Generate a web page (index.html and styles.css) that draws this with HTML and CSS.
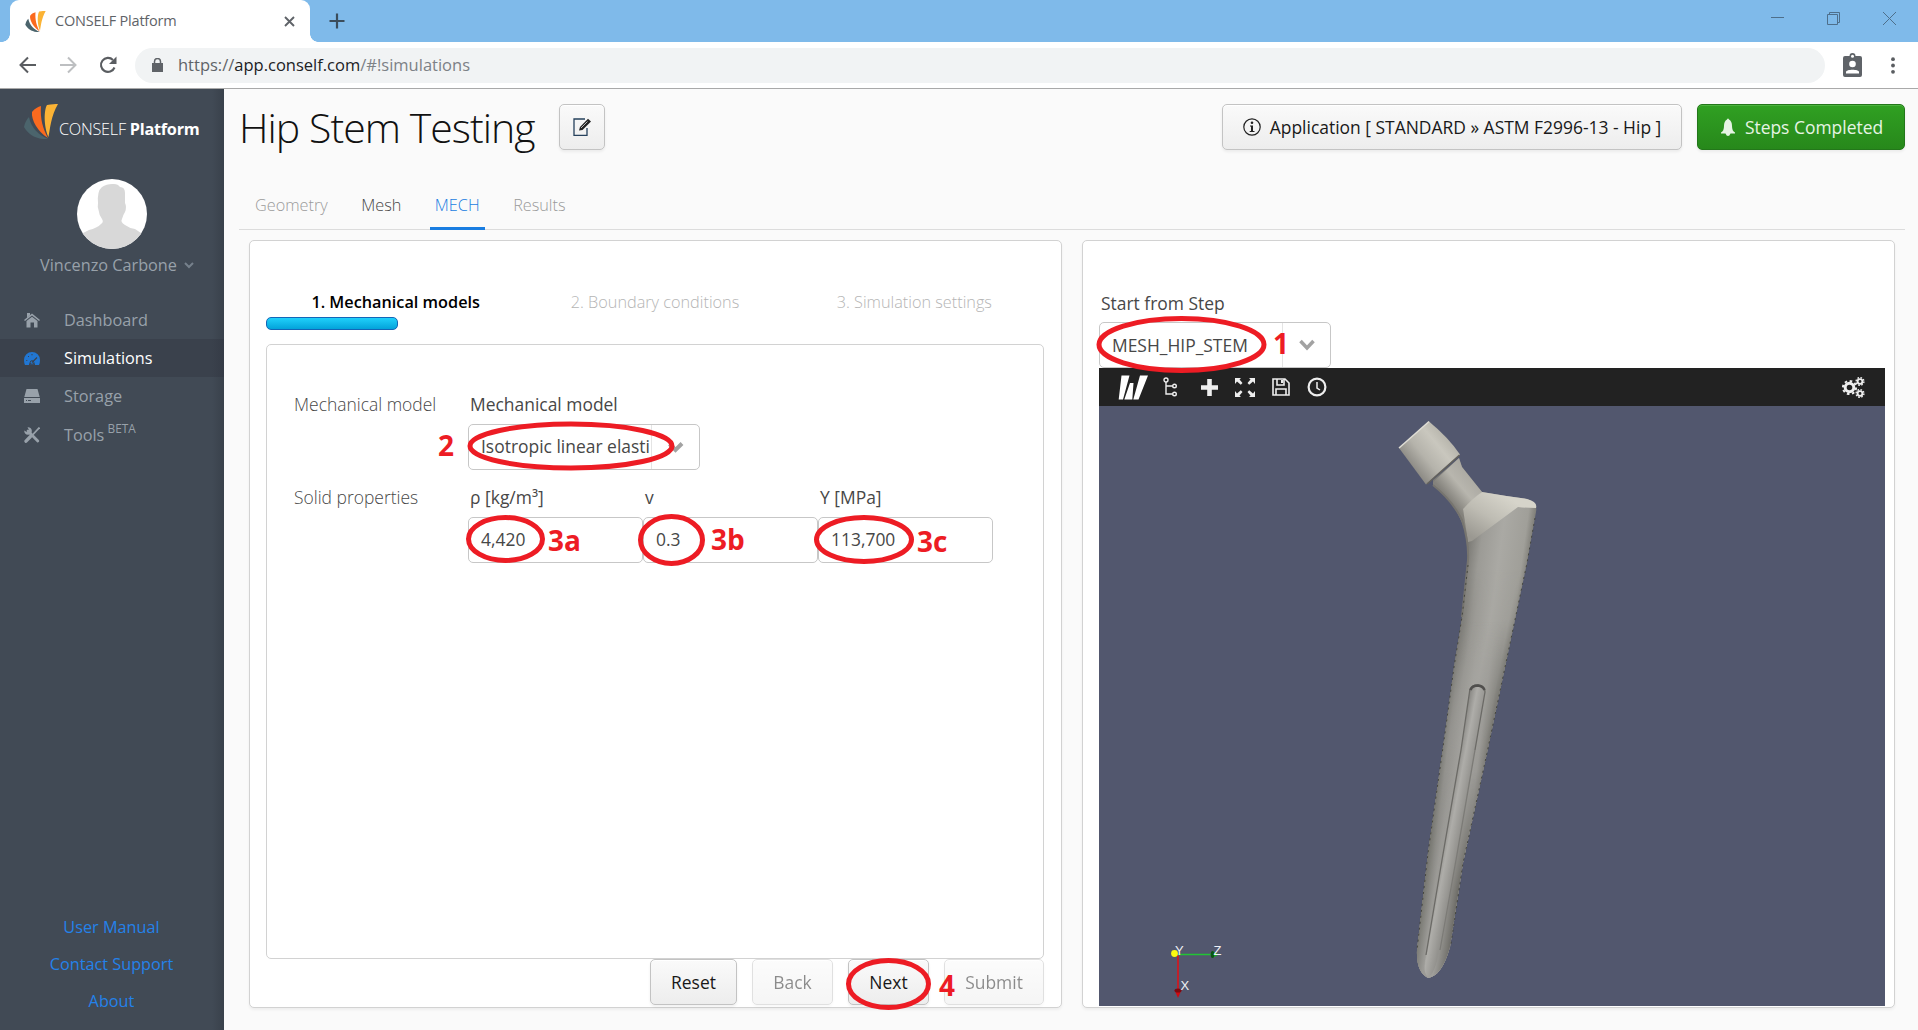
FILE: index.html
```html
<!DOCTYPE html>
<html lang="en">
<head>
<meta charset="utf-8">
<title>CONSELF Platform</title>
<link rel="stylesheet" href="styles.css">
</head>
<body>
<svg class="defs" width="0" height="0">
  <symbol id="flame" viewBox="0 0 34 35">
    <path d="M34 0C27 12 26 25 24.500 33C19.500 22 20 6 23 1C28 0 31 0 34 0Z" fill="#fbb335"/>
    <path d="M17 2C16 15 19 25 24 34C14 28 7 16 8 8C11 4 14 3 17 2Z" fill="#fb6a1e"/>
    <path d="M5 13C7 24 15 31 24 35C12 36 4 30 0 23C1 18 3 15 5 13Z" fill="#4b646c"/>
  </symbol>
</svg>
<header class="tabstrip">
  <div class="tab">
    <svg class="favicon" width="21" height="21"><use href="#flame"/></svg>
    <span class="tab-title">CONSELF Platform</span>
    <svg class="tab-close" width="11" height="11" viewBox="0 0 11 11"><path d="M1 1L10 10M10 1L1 10" stroke="#5f6368" stroke-width="1.9"/></svg>
  </div>
  <svg class="newtab" width="16" height="16" viewBox="0 0 16 16"><path d="M8 .5V15.5M.5 8H15.500" stroke="#3b4d5c" stroke-width="2.200"/></svg>
  <div class="winctl">
    <svg width="13" height="13" viewBox="0 0 13 13"><path d="M0 5.500H13" stroke="#4e6f8b"/></svg>
    <svg width="13" height="13" viewBox="0 0 13 13"><path d="M.5 2.500H10.500V12.500H.5ZM2.500 2.500V.5H12.500V10.500H10.500" fill="none" stroke="#4e6f8b"/></svg>
    <svg width="13" height="13" viewBox="0 0 13 13"><path d="M0 0L13 13M13 0L0 13" stroke="#4e6f8b"/></svg>
  </div>
</header>
<nav class="toolbar">
  <svg class="nav" width="18" height="18" viewBox="0 0 18 18"><path d="M17 9H2M9 1.500L1.500 9L9 16.500" fill="none" stroke="#5a5d61" stroke-width="2"/></svg>
  <svg class="nav" width="18" height="18" viewBox="0 0 18 18"><path d="M1 9H16M9 1.500L16.500 9L9 16.500" fill="none" stroke="#bdbfc1" stroke-width="2"/></svg>
  <svg class="nav" width="18" height="18" viewBox="0 0 18 18"><path d="M15.500 11.500A7 7 0 1 1 14 4" fill="none" stroke="#5a5d61" stroke-width="2.100"/><path d="M17.500 .5V8H10Z" fill="#5a5d61"/></svg>
  <div class="omnibox">
    <svg width="11" height="14" viewBox="0 0 11 14"><path d="M0 5H11V14H0Z" fill="#5f6368"/><path d="M2.500 6V3.500A3 3 0 0 1 8.500 3.500V6" fill="none" stroke="#5f6368" stroke-width="1.500"/></svg>
    <span class="url">https://<b>app.conself.com</b><i>/#!simulations</i></span>
  </div>
  <svg class="badge" width="19" height="24" viewBox="0 0 19 24"><path d="M2 3H6.500A3 3 0 0 1 12.500 3H17Q19 3 19 5V22Q19 24 17 24H2Q0 24 0 22V5Q0 3 2 3Z" fill="#5f6368"/><circle cx="9.500" cy="3.300" r="1.500" fill="#fff"/><circle cx="9.500" cy="11" r="3.300" fill="#fff"/><path d="M3 20.500V19C3 16 16 16 16 19V20.500Z" fill="#fff"/></svg>
  <svg class="dots" width="4" height="17" viewBox="0 0 4 17"><g fill="#5a5d61"><circle cx="2" cy="2.200" r="1.900"/><circle cx="2" cy="8.500" r="1.900"/><circle cx="2" cy="14.800" r="1.900"/></g></svg>
</nav>
<div class="app">
  <aside class="sidebar">
    <div class="brand"><svg width="34" height="35"><use href="#flame"/></svg><span>CONSELF <b>Platform</b></span></div>
    <svg class="avatar" width="70" height="70" viewBox="0 0 70 70"><clipPath id="round"><circle cx="35" cy="35" r="35"/></clipPath><g clip-path="url(#round)"><path d="M0 0H70V70H0Z" fill="#fff"/><path d="M25 8Q30 4.500 37 5Q41 5 43 8Q48 8 48 14V24Q50 28 48 33Q46 36 45 40Q43 43 48 46Q52 49 58 50L64 54L70 60V70H0V60L6 54L12 51Q20 49 24 45Q27 43 25 40Q22 36 22 33Q20 28 21 24Q20 12 25 8Z" fill="#d8d8d8"/></g></svg>
    <div class="user"><span>Vincenzo Carbone</span><svg width="10" height="7" viewBox="0 0 10 7"><path d="M1 1L5 5L9 1" fill="none" stroke="#76818c" stroke-width="2"/></svg></div>
    <ul class="menu">
      <li><svg width="16" height="15" viewBox="0 0 16 15"><path d="M0 7L8 .5L16 7L15 8L8 2.500L1 8ZM3 0H6V2L3 4.500ZM2.500 8L8 3.800L13.500 8V14.500H10V9.500H6.500V14.500H2.500Z" fill="#98a1aa"/></svg><span>Dashboard</span></li>
      <li class="on"><svg width="16" height="13" viewBox="0 0 16 13"><path d="M1 13Q0 11 0 8A8 8 0 0 1 16 8Q16 11 15 13H11A3 3 0 0 0 5 13Z" fill="#2176d2"/><circle cx="8" cy="10.500" r="2.200" fill="#2176d2"/><path d="M8 10.500L13 5.500" stroke="#3a424d" stroke-width="1.300"/><circle cx="8" cy="10.500" r="1.800" fill="none" stroke="#3a424d"/><path d="M2.300 8.500H3.300M4 4L5 5M8 2V3.300" stroke="#3a424d"/></svg><span>Simulations</span></li>
      <li><svg width="16" height="14" viewBox="0 0 16 14"><path d="M2.500 0H13.500L15.700 8H.3ZM0 9H16V14H0Z" fill="#98a1aa"/><path d="M2 11.500H3M4 11.500H7" stroke="#414a55"/></svg><span>Storage</span></li>
      <li class="tools"><svg width="16" height="16" viewBox="0 0 16 16"><path d="M4 4L13.800 14" stroke="#98a1aa" stroke-width="2.800" stroke-linecap="round"/><path d="M3.500 .3A3.800 3.800 0 1 1 .3 3.500L2.800 5L5 3Z" fill="#98a1aa"/><path d="M15.500 .5L8.500 8" stroke="#98a1aa" stroke-width="1.800"/><path d="M6.500 9.500L2 14.200" stroke="#98a1aa" stroke-width="3.300" stroke-linecap="round"/></svg><span>Tools <sup>BETA</sup></span></li>
    </ul>
    <div class="links"><a>User Manual</a><a>Contact Support</a><a>About</a></div>
  </aside>
  <main class="main">
    <div class="head">
      <h1>Hip Stem Testing</h1>
      <button class="btn edit"><svg width="19" height="18" viewBox="0 0 19 18"><path d="M14 10V17.300H1V1H12" fill="none" stroke="#26415c" stroke-width="1.300"/><path d="M6 12.500L7 9L15 .8L18 3.500L9.500 12Z" fill="#222"/><path d="M8 10L14.500 3.500" stroke="#ddd" stroke-width=".8"/></svg></button>
      <button class="btn info"><svg width="18" height="18" viewBox="0 0 18 18"><circle cx="9" cy="9" r="8.200" fill="none" stroke="#222" stroke-width="1.200"/><circle cx="9" cy="4.700" r="1.300" fill="#222"/><path d="M7 7.500H10V13H11.500V14H6.700V13H8V8.500H7Z" fill="#222"/></svg><span>Application [ STANDARD » ASTM F2996-13 - Hip ]</span></button>
      <button class="btn done"><svg width="14" height="18" viewBox="0 0 14 18"><path d="M6 1.500Q7 -.5 8 1.500Q11 3 11 8Q11 13 14 14.500V15.500H9.500Q8.500 18 7 18Q5.500 18 4.500 15.500H0V14.500Q3 13 3 8Q3 3 6 1.500Z" fill="#e6f4e4"/></svg><span>Steps Completed</span></button>
    </div>
    <div class="tabs"><span>Geometry</span><span class="avail">Mesh</span><span class="sel">MECH</span><span>Results</span></div>
    <div class="panels">
      <section class="panel wizard">
        <div class="steps"><span class="cur">1. Mechanical models</span><span>2. Boundary conditions</span><span>3. Simulation settings</span></div>
        <div class="progress"></div>
        <div class="form">
          <div class="row"><label class="cap">Mechanical model</label>
            <div class="field"><label>Mechanical model</label><div class="select"><span class="val">Isotropic linear elasti</span><span class="arrow"><svg width="18" height="12" viewBox="0 0 18 12"><path d="M2.500 3L8.500 9L15 2.500" fill="none" stroke="#a2a2a2" stroke-width="4"/></svg></span></div></div>
          </div>
          <div class="row"><label class="cap">Solid properties</label>
            <div class="fields">
              <div class="field"><label>ρ [kg/m³]</label><div class="input">4,420</div></div>
              <div class="field"><label>v</label><div class="input">0.3</div></div>
              <div class="field"><label>Y [MPa]</label><div class="input">113,700</div></div>
            </div>
          </div>
        </div>
        <div class="actions"><button class="btn reset">Reset</button><button class="btn off back">Back</button><button class="btn next">Next</button><button class="btn off submit">Submit</button></div>
      </section>
      <section class="panel preview">
        <div class="field"><label>Start from Step</label><div class="select"><span class="val">MESH_HIP_STEM</span><span class="arrow"><svg width="18" height="12" viewBox="0 0 18 12"><path d="M2.500 2L9 9L15.500 2" fill="none" stroke="#a2a2a2" stroke-width="3.500"/></svg></span></div></div>
        <div class="viewer">
          <div class="vbar">
            <svg class="w" width="30" height="25" viewBox="0 0 30 25"><path d="M3.500 0.500H11.500L5 24.500H.7ZM12 8H15.500L14.300 24.500H6.300ZM22 .5H30L20.500 24.500H15.300Z" fill="#fff"/></svg>
            <svg class="tree" width="14" height="20" viewBox="0 0 14 20"><g fill="none" stroke="#eee" stroke-width="1.400"><circle cx="3" cy="3" r="2"/><circle cx="11.500" cy="9" r="1.800"/><circle cx="11.500" cy="17" r="1.800"/><path d="M3 5V17H9.500M3 9H9.500"/></g></svg>
            <svg class="plus" width="17" height="17" viewBox="0 0 17 17"><path d="M8.500 0V17M0 8.500H17" stroke="#eee" stroke-width="4.600"/></svg>
            <svg class="full" width="20" height="19" viewBox="0 0 20 19"><path d="M0 0H6L4.500 1.500L7.500 5L5.800 6.700L2 3.600L0 6ZM20 0V6L18 3.600L14.200 6.700L12.500 5L15.500 1.500L14 0ZM0 19V13L2 15.400L5.800 12.300L7.500 14L4.500 17.500L6 19ZM20 19H14L15.500 17.500L12.500 14L14.200 12.300L18 15.400L20 13Z" fill="#eee"/></svg>
            <svg class="save" width="18" height="18" viewBox="0 0 18 18"><path d="M1 1H13L17 5V17H1ZM5 1V7H12V1M4 17V11H14V17" fill="none" stroke="#eee" stroke-width="1.600"/><path d="M9 2H11V5H9Z" fill="#eee"/></svg>
            <svg class="clock" width="20" height="20" viewBox="0 0 20 20"><circle cx="10" cy="10" r="8.400" fill="none" stroke="#eee" stroke-width="2.200"/><path d="M10 5V11L13 13" fill="none" stroke="#eee" stroke-width="1.500"/></svg>
            <svg class="cogs" width="23" height="21" viewBox="0 0 23 21"><g fill="none" stroke="#eee"><circle cx="7.500" cy="10.500" r="4.300" stroke-width="3"/><circle cx="7.500" cy="10.500" r="6.600" stroke-width="2" stroke-dasharray="2.600 2.580"/><circle cx="18" cy="4.500" r="2.400" stroke-width="1.900"/><circle cx="18" cy="4.500" r="3.900" stroke-width="1.400" stroke-dasharray="1.600 1.460"/><circle cx="18" cy="16.500" r="2.400" stroke-width="1.900"/><circle cx="18" cy="16.500" r="3.900" stroke-width="1.400" stroke-dasharray="1.600 1.460"/></g></svg>
          </div>
          <svg class="scene" width="786" height="600" viewBox="1099 406 786 600">
            <defs>
              <linearGradient id="body" gradientUnits="userSpaceOnUse" x1="1439" y1="760" x2="1487" y2="766"><stop offset="0" stop-color="#75756f"/><stop offset=".15" stop-color="#93928e"/><stop offset=".5" stop-color="#a6a5a1"/><stop offset=".8" stop-color="#9b9a96"/><stop offset="1" stop-color="#75746f"/></linearGradient>
              <linearGradient id="upper" gradientUnits="userSpaceOnUse" x1="1460" y1="600" x2="1525" y2="609"><stop offset="0" stop-color="#7b7a75"/><stop offset=".2" stop-color="#9c9b96"/><stop offset=".5" stop-color="#aaa9a4"/><stop offset=".85" stop-color="#a09f99"/><stop offset="1" stop-color="#74736d"/></linearGradient>
              <linearGradient id="cap" gradientUnits="userSpaceOnUse" x1="1412" y1="466" x2="1446" y2="438"><stop offset="0" stop-color="#8e8c86"/><stop offset=".35" stop-color="#b5b3ab"/><stop offset=".75" stop-color="#c9c7be"/><stop offset="1" stop-color="#b9b7ae"/></linearGradient>
              <linearGradient id="neck" gradientUnits="userSpaceOnUse" x1="1450" y1="500" x2="1476" y2="478"><stop offset="0" stop-color="#84827c"/><stop offset=".5" stop-color="#b8b6ae"/><stop offset="1" stop-color="#aaa8a1"/></linearGradient>
              <linearGradient id="shoulder" gradientUnits="userSpaceOnUse" x1="1468" y1="535" x2="1496" y2="490"><stop offset="0" stop-color="#9a9891"/><stop offset=".5" stop-color="#bebcb3"/><stop offset="1" stop-color="#d6d4ca"/></linearGradient>
              <linearGradient id="fade" gradientUnits="userSpaceOnUse" x1="0" y1="620" x2="0" y2="760"><stop offset="0" stop-color="#000"/><stop offset="1" stop-color="#fff"/></linearGradient>
              <mask id="blend" maskUnits="userSpaceOnUse" x="1400" y="560" width="150" height="430"><path d="M1400 560H1550V990H1400Z" fill="url(#fade)"/></mask>
              <linearGradient id="mid" gradientUnits="userSpaceOnUse" x1="1452" y1="680" x2="1503" y2="690"><stop offset="0" stop-color="#7b7a75"/><stop offset=".2" stop-color="#989792"/><stop offset=".5" stop-color="#a8a7a2"/><stop offset=".85" stop-color="#9d9c97"/><stop offset="1" stop-color="#74736d"/></linearGradient>
              <linearGradient id="low" gradientUnits="userSpaceOnUse" x1="1422" y1="900" x2="1457" y2="905"><stop offset="0" stop-color="#75756f"/><stop offset=".3" stop-color="#9b9a96"/><stop offset=".6" stop-color="#a09f9b"/><stop offset="1" stop-color="#6b6a65"/></linearGradient>
              <linearGradient id="fadeLow" gradientUnits="userSpaceOnUse" x1="0" y1="770" x2="0" y2="890"><stop offset="0" stop-color="#000"/><stop offset="1" stop-color="#fff"/></linearGradient>
              <mask id="blendLow" maskUnits="userSpaceOnUse" x="1400" y="560" width="150" height="430"><path d="M1400 560H1550V990H1400Z" fill="url(#fadeLow)"/></mask>
              <linearGradient id="fadeMid" gradientUnits="userSpaceOnUse" x1="0" y1="570" x2="0" y2="660"><stop offset="0" stop-color="#000"/><stop offset="1" stop-color="#fff"/></linearGradient>
              <mask id="blendMid" maskUnits="userSpaceOnUse" x="1400" y="560" width="150" height="430"><path d="M1400 560H1550V990H1400Z" fill="url(#fadeMid)"/></mask>
              <linearGradient id="slot" gradientUnits="userSpaceOnUse" x1="1448" y1="810" x2="1464" y2="813"><stop offset="0" stop-color="#8b8a86"/><stop offset=".4" stop-color="#aeada9"/><stop offset="1" stop-color="#93928e"/></linearGradient>
              <path id="stem" d="M1433 480L1459 458L1462 467L1482 492Q1505 496 1527 499Q1538 502 1536 512L1527 563L1508 653L1487 753L1463 863L1450 947Q1442 976 1428 978Q1416 972 1417 950L1428 853L1445 733L1454 667L1462 617L1468 560Q1469 542 1462 520Q1452 500 1433 485Z"/>
            </defs>
            <use href="#stem" fill="url(#upper)"/>
            <g mask="url(#blendMid)"><use href="#stem" fill="url(#mid)"/></g>
            <g mask="url(#blend)"><use href="#stem" fill="url(#body)"/></g>
            <g mask="url(#blendLow)"><use href="#stem" fill="url(#low)"/></g>
            <path d="M1433 482L1459 458L1462 467L1482 492L1463 509L1468 541Q1458 502 1433 485Z" fill="url(#neck)"/>
            <path d="M1482 492Q1505 496 1527 499Q1538 502 1536 508Q1526 508 1518 507L1472 541L1468 542L1463 509Q1473 498 1482 492Z" fill="url(#shoulder)"/>
            <path d="M1468 560Q1469 542 1462 520Q1452 500 1433 485M1462 617L1468 560" fill="none" stroke="#77756f" stroke-width="2"/>
            <path d="M1429 421.500Q1448 437 1460 454.500L1426 484.500L1399 448Z" fill="url(#cap)"/>
            <path d="M1399 448L1429 421.500" stroke="#e0ded5" stroke-width="1.500"/>
            <path d="M1459.500 455L1427 484" stroke="#64625c" stroke-width="1.500"/>
            <path d="M1535 518L1527 563L1508 653L1487 753L1463 863L1451 944M1468 565L1462 617L1454 667L1445 733L1428 853L1417 950" fill="none" stroke="#45463f" stroke-width="1" stroke-dasharray="2 4"/>
            <path d="M1469.500 692Q1470 685 1478 685Q1485 686 1485 692L1475 750L1456 860L1440 950Q1434 976 1428 977Q1422 972 1426 955L1442 860L1461 750Z" fill="url(#slot)"/>
            <path d="M1426 955L1442 860L1461 750L1469.500 692Q1470 685 1478 685Q1485 686 1485 692L1475 750" fill="none" stroke="#6b6a66" stroke-width="1.300"/>
            <path d="M1475 750L1456 860L1440 950" fill="none" stroke="#7c7b77" stroke-width="1.300"/>
            <path d="M1470.500 690Q1472 685.500 1478 685.500Q1483 686 1484.500 690" fill="none" stroke="#504f4d" stroke-width="2.500"/>
            <path d="M1178 955V989" stroke="#c0202a" stroke-width="2"/><path d="M1174.500 990H1181.500L1178 998Z" fill="#d00a12"/><ellipse cx="1178" cy="990.500" rx="3.500" ry="2" fill="#7c0a10"/>
            <path d="M1178 954.500H1212" stroke="#22c434" stroke-width="1.600"/><path d="M1212 951L1219 954.500L1212 958Z" fill="#12b322"/><ellipse cx="1212.500" cy="954.500" rx="1.800" ry="3.500" fill="#0c5514"/>
            <circle cx="1174.500" cy="953.500" r="3.400" fill="#fbfb10"/>
            <g class="axis"><text x="1175" y="955">Y</text><text x="1213.500" y="955">Z</text><text x="1180.500" y="990">X</text></g>
          </svg>
        </div>
      </section>
    </div>
  </main>
</div>
<svg class="notes" width="1918" height="1030" viewBox="0 0 1918 1030">
  <g fill="none" stroke="#ed1c24" stroke-width="5">
    <ellipse cx="1181.500" cy="344.500" rx="82.500" ry="26"/>
    <ellipse cx="571" cy="446" rx="101" ry="22"/>
    <ellipse cx="505.500" cy="539" rx="37" ry="21.500"/>
    <ellipse cx="671.500" cy="540" rx="31" ry="23.500"/>
    <ellipse cx="864" cy="539.500" rx="47.500" ry="22"/>
    <ellipse cx="888.500" cy="984" rx="40" ry="23.500"/>
  </g>
  <g class="marks"><text x="1273" y="354">1</text><text x="438" y="456">2</text><text x="548" y="551">3a</text><text x="711" y="550">3b</text><text x="917" y="552">3c</text><text x="939" y="996">4</text></g>
</svg>
</body>
</html>
```
FILE: styles.css
```css
* { box-sizing: border-box; }
body { margin: 0; width: 1918px; height: 1030px; overflow: hidden; display: flex; flex-direction: column; position: relative; font: 300 16.25px/24px "Open Sans", "Noto Sans", sans-serif; background: #fafafa; color: #474747; }
svg { flex: none; display: block; }
.defs { position: absolute; }
.tabstrip { flex: none; height: 42px; background: #7fbaea; display: flex; align-items: flex-start; padding-left: 10px; }
.tab { width: 300px; height: 42px; background: #fff; border-radius: 9px 9px 0 0; display: flex; align-items: center; padding: 0 15px; position: relative; }
.tab::before, .tab::after { content: ""; position: absolute; bottom: 0; width: 8px; height: 8px; }
.tab::before { left: -8px; background: radial-gradient(circle at 0 0, transparent 7.5px, #fff 8px); }
.tab::after { right: -8px; background: radial-gradient(circle at 100% 0, transparent 7.500px, #fff 8px); }
.tab-title { flex: 1; margin: -1px 0 0 9px; font-size: 14.5px; font-weight: 400; color: #5f6368; white-space: nowrap; letter-spacing: -.2px; }
.newtab { margin: 13px 0 0 19px; }
.winctl { margin: 12px 22px 0 auto; display: flex; gap: 43px; }
.toolbar { flex: none; height: 47px; background: #fff; border-bottom: 1px solid #a9a9a9; display: flex; align-items: center; padding-left: 19px; }
.nav { margin-right: 22px; }
.nav + .nav + .nav { margin-right: 18px; }
.omnibox { width: 1690px; height: 35px; border-radius: 18px; background: #f1f3f4; display: flex; align-items: center; padding-left: 17px; gap: 15px; }
.url { font-weight: 400; font-size: 16.5px; color: #5f6368; }
.url b { font-weight: 400; color: #202124; }
.url i { font-style: normal; color: #7d8186; }
.badge { margin-left: 18px; }
.dots { margin-left: 29px; }
.app { flex: 1; display: flex; min-height: 0; }
.sidebar { flex: none; width: 224px; background: linear-gradient(to left, #39414b 0, #414a55 12px); display: flex; flex-direction: column; font-weight: 400; color: #98a1aa; }
.brand { height: 51px; padding: 15px 0 0 24px; display: flex; color: #fff; white-space: nowrap; }
.brand span { padding-top: 13px; margin-left: 1px; font-weight: 300; letter-spacing: -.25px; }
.brand b { font-weight: 700; }
.avatar { margin: 39px 0 0 77px; }
.user { height: 24px; margin: 4px 0 0 40px; display: flex; align-items: center; gap: 7px; }
.menu { list-style: none; margin: 24px 0 0; padding: 0; }
.menu li { height: 38px; padding-left: 24px; display: flex; align-items: center; gap: 24px; }
.menu .on { background: linear-gradient(to left, #353b46 0, #3a414c 12px); color: #fff; }
.menu .tools { padding-top: 2px; }
.menu sup { font-size: 11.8px; line-height: 0; position: relative; top: -2px; margin-left: -1px; }
.links { margin: auto 0 10px; display: flex; flex-direction: column; align-items: center; color: #2482ea; }
.links a { height: 37px; line-height: 37px; margin-right: 1px; }
.main { flex: 1; padding: 15px 13px 0 15px; }
.head { height: 46px; display: flex; align-items: center; }
h1 { margin: 0; width: 320px; font-size: 41px; line-height: 46px; font-weight: 300; color: #111; white-space: nowrap; letter-spacing: -.95px; }
.btn { height: 46px; border: 1px solid #c3c3c3; border-radius: 5px; background: linear-gradient(#fafafa, #ededed); color: #191919; font: 400 17.45px/24px "Open Sans", sans-serif; box-shadow: inset 0 1px 0 #fff, 0 2px 3px rgba(0,0,0,.06); display: flex; align-items: center; justify-content: center; white-space: nowrap; padding: 0; }
.edit { width: 46px; }
.info { width: 460px; margin-left: auto; gap: 9px; }
.done { width: 208px; margin-left: 15px; padding-left: 2px; gap: 10px; background: linear-gradient(#30a022, #27881b); border-color: #23771a; color: #e6f4e4; box-shadow: inset 0 1px 0 #4cb23f, 0 2px 3px rgba(0,0,0,.06); }
.tabs { height: 80px; border-bottom: 1px solid #dcdcdc; display: flex; gap: 33.5px; padding: 45px 0 0 16px; line-height: 20px; color: #9a9a9a; }
.tabs span { height: 35px; }
.tabs .avail { color: #474747; }
.tabs .sel { color: #197de1; border-bottom: 3px solid #197de1; padding: 0 5px; margin: 0 -5px; }
.panels { display: flex; gap: 20px; padding: 10px 0 0 10px; }
.panel { height: 768px; background: #fff; border: 1px solid #d2d2d2; border-radius: 5px; box-shadow: 0 2px 3px rgba(0,0,0,.05); }
.wizard { width: 813px; padding: 49px 17px 0 16px; }
.steps { height: 25px; display: flex; }
.steps span { flex: 1; text-align: center; color: #b5b5b5; white-space: nowrap; }
.steps .cur { color: #000; font-weight: 600; }
.progress { margin-top: 2px; width: 132px; height: 13px; border: 1px solid #1366b8; border-radius: 5px; background: linear-gradient(#20d0fb, #03a3da); }
.form { margin-top: 14px; height: 615px; border: 1px solid #d2d2d2; border-radius: 5px; padding: 47px 0 0 27px; font-size: 17.45px; }
.row { display: flex; height: 93px; }
.cap { width: 174px; }
.field label { display: block; height: 32px; padding-left: 2px; font-weight: 400; }
.fields { display: flex; }
.input, .select { height: 46px; border: 1px solid #c7c7c7; border-radius: 5px; background: #fff; line-height: 43px; font-weight: 400; }
.input { width: 175px; padding-left: 12px; }
.select { width: 232px; display: flex; }
.val { flex: 1; padding-left: 12px; white-space: nowrap; }
.arrow { flex: none; width: 48px; border-left: 1px solid #e4e4e4; display: flex; align-items: center; justify-content: center; }
.actions { display: flex; justify-content: flex-end; gap: 15px; }
.reset { width: 87px; }
.back, .next { width: 81px; }
.submit { width: 100px; }
.off { opacity: .5; }
.preview { width: 813px; padding: 50px 0 0 16px; font-size: 17.45px; }
.preview .field label { height: 31px; }
.preview .select { line-height: 45px; }
.viewer { width: 786px; background: #52576e; }
.vbar { height: 38px; background: #222; display: flex; align-items: center; padding-left: 19px; }
.tree { margin-left: 15px; }
.plus { margin-left: 24px; }
.full { margin-left: 17px; }
.save { margin-left: 17px; }
.clock { margin-left: 17px; }
.cogs { margin: 0 20px 0 auto; }
.axis { font: 400 13px "Liberation Sans", sans-serif; fill: #eef0f5; }
.notes { position: absolute; left: 0; top: 0; pointer-events: none; }
.marks { font: 700 28px "Open Sans", sans-serif; fill: #ed1c24; }
```
